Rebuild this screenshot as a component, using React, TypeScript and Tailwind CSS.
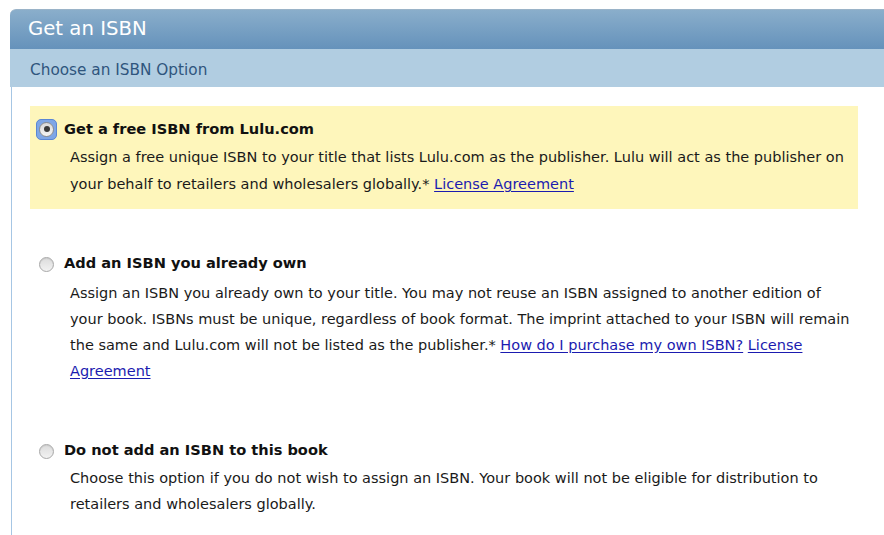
import React from "react";

const font = { fontFamily: '"DejaVu Sans", Verdana, sans-serif' };

function CheckedRadio() {
  return (
    <div className="w-[21px] h-[21px] rounded-[5px] bg-[#7ea6e6] border border-[#5a86d4] flex items-center justify-center shrink-0">
      <div className="w-[15px] h-[15px] rounded-full bg-gradient-to-b from-[#d9d9d9] to-[#f4f4f4] border border-[#8c8c8c] flex items-center justify-center">
        <div className="w-[6px] h-[6px] rounded-full bg-[#3a3a3a]" />
      </div>
    </div>
  );
}

function Radio() {
  return (
    <div className="w-[21px] h-[21px] flex items-center justify-center shrink-0 pt-[3px]">
      <div className="w-[15px] h-[15px] rounded-full bg-gradient-to-b from-[#dcdcdc] to-[#f2f2f2] border border-[#a8a8a8] shadow-[inset_0_1px_1px_rgba(0,0,0,0.08)]" />
    </div>
  );
}

function Link({ children }: { children: React.ReactNode }) {
  return <a href="#" className="text-[#1b1bb0] underline underline-offset-2">{children}</a>;
}

function Option({
  checked,
  title,
  lines,
  highlight,
  descClass,
  padB,
}: {
  checked?: boolean;
  title: string;
  lines: React.ReactNode[];
  highlight?: boolean;
  descClass: string;
  padB: string;
}) {
  return (
    <div className={`w-[828px] pl-[6px] pt-[11px] ${padB} ${highlight ? "bg-[#fef6bb]" : ""}`}>
      <div className="flex items-center h-[24px] gap-[7px]">
        {checked ? <CheckedRadio /> : <Radio />}
        <div className="text-[14.6px] font-bold text-[#111] whitespace-nowrap">{title}</div>
      </div>
      <div className={`pl-[34px] text-[14.5px] text-[#1a1a1a] ${descClass}`}>
        {lines.map((l, i) => (
          <div key={i} className="whitespace-nowrap">{l}</div>
        ))}
      </div>
    </div>
  );
}

export default function App() {
  return (
    <div className="w-[884px] h-[535px] bg-white overflow-hidden pt-[9px] pl-[10px]" style={font}>
      <div className="w-[900px]">
        <div className="h-[40px] rounded-tl-[6px] bg-gradient-to-b from-[#8aaecb] to-[#6592bb] border-t border-[#9ab3c8] flex items-center pl-[18px] pb-[2px]">
          <span className="text-white text-[19.7px]">Get an ISBN</span>
        </div>
        <div className="h-[38px] bg-[#b1cde1] flex items-center pl-[20px] pt-[4px]">
          <span className="text-[#2f557d] text-[15.3px]">Choose an ISBN Option</span>
        </div>
        <div className="ml-px border-l border-[#a6c6e4] h-[500px] pl-[18px] pt-[19px] flex flex-col">
          <Option
            checked
            highlight
            padB="pb-[11px]"
            descClass="mt-[3px] leading-[27px]"
            title="Get a free ISBN from Lulu.com"
            lines={[
              "Assign a free unique ISBN to your title that lists Lulu.com as the publisher. Lulu will act as the publisher on",
              <>your behalf to retailers and wholesalers globally.* <Link>License Agreement</Link></>,
            ]}
          />
          <div className="mt-[31px]">
            <Option
              padB="pb-[12px]"
              descClass="mt-[5px] leading-[26px]"
              title="Add an ISBN you already own"
              lines={[
                "Assign an ISBN you already own to your title. You may not reuse an ISBN assigned to another edition of",
                "your book. ISBNs must be unique, regardless of book format. The imprint attached to your ISBN will remain",
                <>the same and Lulu.com will not be listed as the publisher.* <Link>How do I purchase my own ISBN?</Link> <Link>License</Link></>,
                <Link>Agreement</Link>,
              ]}
            />
          </div>
          <div className="mt-[31px]">
            <Option
              padB="pb-[12px]"
              descClass="mt-[3px] leading-[26px]"
              title="Do not add an ISBN to this book"
              lines={[
                "Choose this option if you do not wish to assign an ISBN. Your book will not be eligible for distribution to",
                "retailers and wholesalers globally.",
              ]}
            />
          </div>
        </div>
      </div>
    </div>
  );
}
